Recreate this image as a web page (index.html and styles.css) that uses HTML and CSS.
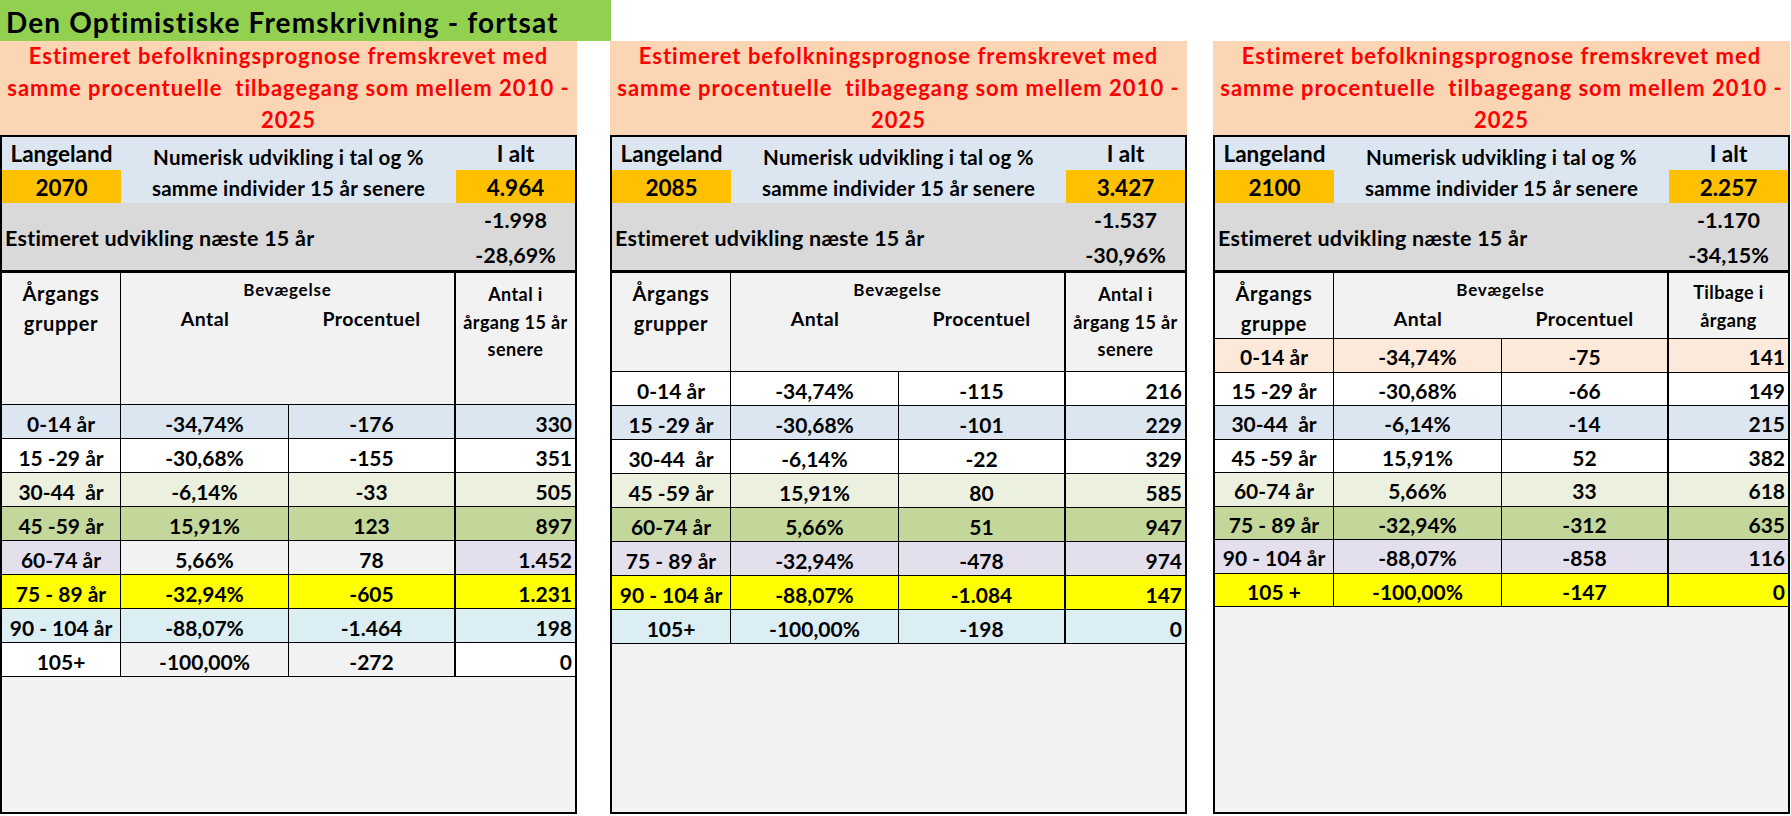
FILE: index.html
```html
<!DOCTYPE html>
<html lang="da">
<head>
<meta charset="utf-8">
<title>Den Optimistiske Fremskrivning - fortsat</title>
<link rel="stylesheet" href="styles.css">
</head>
<body>
<div class="page">
  <div class="title">Den Optimistiske Fremskrivning - fortsat</div>
  <div class="panels">

    <section class="panel p1">
      <div class="sub"><span>Estimeret befolkningsprognose fremskrevet med</span><span>samme procentuelle  tilbagegang som mellem 2010 -</span><span>2025</span></div>
      <div class="box">
        <div class="top">
          <div class="c-land">Langeland</div>
          <div class="c-num"><span>Numerisk udvikling i tal og %</span><span>samme individer 15 år senere</span></div>
          <div class="c-alt">I alt</div>
          <div class="c-year">2070</div>
          <div class="c-total">4.964</div>
        </div>
        <div class="est">
          <div class="est-label">Estimeret udvikling næste 15 år</div>
          <div class="est-val"><span>-1.998</span><span>-28,69%</span></div>
        </div>
        <div class="head">
          <div class="h-grp"><span>Årgangs</span><span>grupper</span></div>
          <div class="h-mov"><div class="h-mov-title">Bevægelse</div><div class="h-mov-sub"><span>Antal</span><span>Procentuel</span></div></div>
          <div class="h-cnt"><span>Antal i</span><span>årgang 15 år</span><span>senere</span></div>
        </div>
        <div class="row bl"><div>0-14 år</div><div>-34,74%</div><div>-176</div><div class="n">330</div></div>
        <div class="row wh"><div>15 -29 år</div><div>-30,68%</div><div>-155</div><div class="n">351</div></div>
        <div class="row lg"><div>30-44  år</div><div>-6,14%</div><div>-33</div><div class="n">505</div></div>
        <div class="row gr"><div>45 -59 år</div><div>15,91%</div><div>123</div><div class="n">897</div></div>
        <div class="row lv"><div>60-74 år</div><div class="gy">5,66%</div><div class="gy">78</div><div class="n">1.452</div></div>
        <div class="row ye"><div>75 - 89 år</div><div>-32,94%</div><div>-605</div><div class="n">1.231</div></div>
        <div class="row aq"><div>90 - 104 år</div><div>-88,07%</div><div>-1.464</div><div class="n">198</div></div>
        <div class="row wh"><div>105+</div><div class="gy">-100,00%</div><div class="gy">-272</div><div class="n">0</div></div>
        <div class="fill"></div>
      </div>
    </section>

    <section class="panel p2">
      <div class="sub"><span>Estimeret befolkningsprognose fremskrevet med</span><span>samme procentuelle  tilbagegang som mellem 2010 -</span><span>2025</span></div>
      <div class="box">
        <div class="top">
          <div class="c-land">Langeland</div>
          <div class="c-num"><span>Numerisk udvikling i tal og %</span><span>samme individer 15 år senere</span></div>
          <div class="c-alt">I alt</div>
          <div class="c-year">2085</div>
          <div class="c-total">3.427</div>
        </div>
        <div class="est">
          <div class="est-label">Estimeret udvikling næste 15 år</div>
          <div class="est-val"><span>-1.537</span><span>-30,96%</span></div>
        </div>
        <div class="head">
          <div class="h-grp"><span>Årgangs</span><span>grupper</span></div>
          <div class="h-mov"><div class="h-mov-title">Bevægelse</div><div class="h-mov-sub"><span>Antal</span><span>Procentuel</span></div></div>
          <div class="h-cnt"><span>Antal i</span><span>årgang 15 år</span><span>senere</span></div>
        </div>
        <div class="row wh"><div>0-14 år</div><div>-34,74%</div><div>-115</div><div class="n">216</div></div>
        <div class="row bl"><div>15 -29 år</div><div>-30,68%</div><div>-101</div><div class="n">229</div></div>
        <div class="row wh"><div>30-44  år</div><div>-6,14%</div><div>-22</div><div class="n">329</div></div>
        <div class="row lg"><div>45 -59 år</div><div>15,91%</div><div>80</div><div class="n">585</div></div>
        <div class="row gr"><div>60-74 år</div><div>5,66%</div><div>51</div><div class="n">947</div></div>
        <div class="row lv"><div>75 - 89 år</div><div>-32,94%</div><div>-478</div><div class="n">974</div></div>
        <div class="row ye"><div>90 - 104 år</div><div>-88,07%</div><div>-1.084</div><div class="n">147</div></div>
        <div class="row aq"><div>105+</div><div>-100,00%</div><div>-198</div><div class="n">0</div></div>
        <div class="fill"></div>
      </div>
    </section>

    <section class="panel p3">
      <div class="sub"><span>Estimeret befolkningsprognose fremskrevet med</span><span>samme procentuelle  tilbagegang som mellem 2010 -</span><span>2025</span></div>
      <div class="box">
        <div class="top">
          <div class="c-land">Langeland</div>
          <div class="c-num"><span>Numerisk udvikling i tal og %</span><span>samme individer 15 år senere</span></div>
          <div class="c-alt">I alt</div>
          <div class="c-year">2100</div>
          <div class="c-total">2.257</div>
        </div>
        <div class="est">
          <div class="est-label">Estimeret udvikling næste 15 år</div>
          <div class="est-val"><span>-1.170</span><span>-34,15%</span></div>
        </div>
        <div class="head">
          <div class="h-grp"><span>Årgangs</span><span>gruppe</span></div>
          <div class="h-mov"><div class="h-mov-title">Bevægelse</div><div class="h-mov-sub"><span>Antal</span><span>Procentuel</span></div></div>
          <div class="h-cnt"><span>Tilbage i</span><span>årgang</span></div>
        </div>
        <div class="row pe"><div>0-14 år</div><div>-34,74%</div><div>-75</div><div class="n">141</div></div>
        <div class="row wh"><div>15 -29 år</div><div>-30,68%</div><div>-66</div><div class="n">149</div></div>
        <div class="row bl"><div>30-44  år</div><div>-6,14%</div><div>-14</div><div class="n">215</div></div>
        <div class="row wh"><div>45 -59 år</div><div>15,91%</div><div>52</div><div class="n">382</div></div>
        <div class="row lg"><div>60-74 år</div><div>5,66%</div><div>33</div><div class="n">618</div></div>
        <div class="row gr"><div>75 - 89 år</div><div>-32,94%</div><div>-312</div><div class="n">635</div></div>
        <div class="row lv"><div>90 - 104 år</div><div>-88,07%</div><div>-858</div><div class="n">116</div></div>
        <div class="row ye"><div>105 +</div><div>-100,00%</div><div>-147</div><div class="n">0</div></div>
        <div class="fill"></div>
      </div>
    </section>

  </div>
</div>
</body>
</html>
```

FILE: styles.css
```css
html, body {
  margin: 0;
  padding: 0;
  background: #ffffff;
}

body {
  font-family: "Lato", "Liberation Sans", sans-serif;
  font-weight: 700;
  color: #000000;
}

.page {
  width: 1791px;
  height: 816px;
  overflow: hidden;
}

.title {
  width: 611px;
  height: 41px;
  box-sizing: border-box;
  padding-left: 6px;
  background: #92d050;
  font-size: 28px;
  letter-spacing: 1.15px;
  line-height: 44px;
  white-space: nowrap;
}

.panels {
  display: flex;
  align-items: flex-start;
}

.panel {
  flex: none;
  width: 577px;
  display: flex;
  flex-direction: column;
  --hh: 132px;
  --rh: 34px;
}

.p2 {
  margin-left: 33px;
  --hh: 99px;
}

.p3 {
  margin-left: 26px;
  --hh: 66px;
  --rh: 33.5px;
}

.sub {
  height: 94px;
  background: #fcd5b4;
  color: #ff0000;
  font-size: 22px;
  letter-spacing: 1px;
  line-height: 32px;
  display: flex;
  flex-direction: column;
  align-items: center;
  justify-content: center;
  white-space: pre;
}

.box {
  height: 679px;
  box-sizing: border-box;
  border: 2px solid #000000;
  background: #f2f2f2;
  display: flex;
  flex-direction: column;
}

/* top block */
.top {
  display: grid;
  grid-template-columns: 119px 335px 119px;
  grid-template-rows: 33px 33px;
  background: #dce6f1;
  font-size: 22.5px;
}

.top > div {
  display: flex;
  align-items: center;
  justify-content: center;
  white-space: nowrap;
}

.c-land { grid-column: 1; grid-row: 1; }
.c-alt { grid-column: 3; grid-row: 1; }
.c-year { grid-column: 1; grid-row: 2; background: #ffc000; padding-top: 2px; }
.c-total { grid-column: 3; grid-row: 2; background: #ffc000; padding-top: 2px; }

.top > .c-num {
  grid-column: 2;
  grid-row: 1 / 3;
  flex-direction: column;
  font-size: 20.5px;
  letter-spacing: 0.25px;
  line-height: 31px;
  padding-top: 6px;
}

/* estimate row */
.est {
  height: 67px;
  background: #d9d9d9;
  border-bottom: 3px solid #000000;
  display: flex;
  font-size: 21.5px;
}

.est-label {
  flex: 1;
  display: flex;
  align-items: center;
  padding-left: 3px;
  padding-top: 3px;
  letter-spacing: 0.25px;
  white-space: nowrap;
}

.est-val {
  width: 119px;
  display: flex;
  flex-direction: column;
  align-items: center;
  justify-content: center;
  line-height: 35px;
  padding-top: 2px;
}

/* column headers */
.head {
  height: var(--hh);
  box-sizing: border-box;
  border-bottom: 1px solid #000000;
  background: #f2f2f2;
  display: grid;
  grid-template-columns: 119px 335px 119px;
}

.head > div {
  box-sizing: border-box;
}

.h-grp {
  border-right: 1px solid #000000;
  display: flex;
  flex-direction: column;
  align-items: center;
  font-size: 20px;
  letter-spacing: 0.6px;
  line-height: 30px;
  padding-top: 5px;
}

.h-mov {
  border-right: 2px solid #000000;
  display: flex;
  flex-direction: column;
}

.h-mov-title {
  text-align: center;
  font-size: 17px;
  letter-spacing: 0.8px;
  line-height: 28px;
  padding-top: 3px;
}

.h-mov-sub {
  display: grid;
  grid-template-columns: 168px 165px;
  font-size: 19.5px;
  letter-spacing: 0.4px;
  line-height: 30px;
  text-align: center;
}

.h-cnt {
  display: flex;
  flex-direction: column;
  align-items: center;
  font-size: 18px;
  letter-spacing: 0.4px;
  line-height: 27.5px;
  padding-top: 8px;
  white-space: nowrap;
}

.p3 .h-cnt {
  line-height: 28px;
  padding-top: 5px;
}

/* data rows */
.row {
  height: var(--rh);
  box-sizing: border-box;
  border-bottom: 1px solid #000000;
  display: grid;
  grid-template-columns: 119px 168px 167px 119px;
  font-size: 21px;
}

.row > div {
  box-sizing: border-box;
  display: flex;
  align-items: center;
  justify-content: center;
  padding-top: 3px;
  white-space: pre;
}

.row > div:nth-child(1),
.row > div:nth-child(2) {
  border-right: 1px solid #000000;
}

.row > div:nth-child(3) {
  border-right: 2px solid #000000;
}

.row > .n {
  justify-content: flex-end;
  padding-right: 3px;
}

.fill {
  flex: 1;
  background: #f2f2f2;
}

/* fills */
.bl { background: #dce6f1; }
.wh { background: #ffffff; }
.lg { background: #ebf1de; }
.gr { background: #c4d79b; }
.lv { background: #e4dfec; }
.ye { background: #ffff00; }
.aq { background: #daeef3; }
.pe { background: #fde9d9; }
.row > .gy { background: #f2f2f2; }
```
